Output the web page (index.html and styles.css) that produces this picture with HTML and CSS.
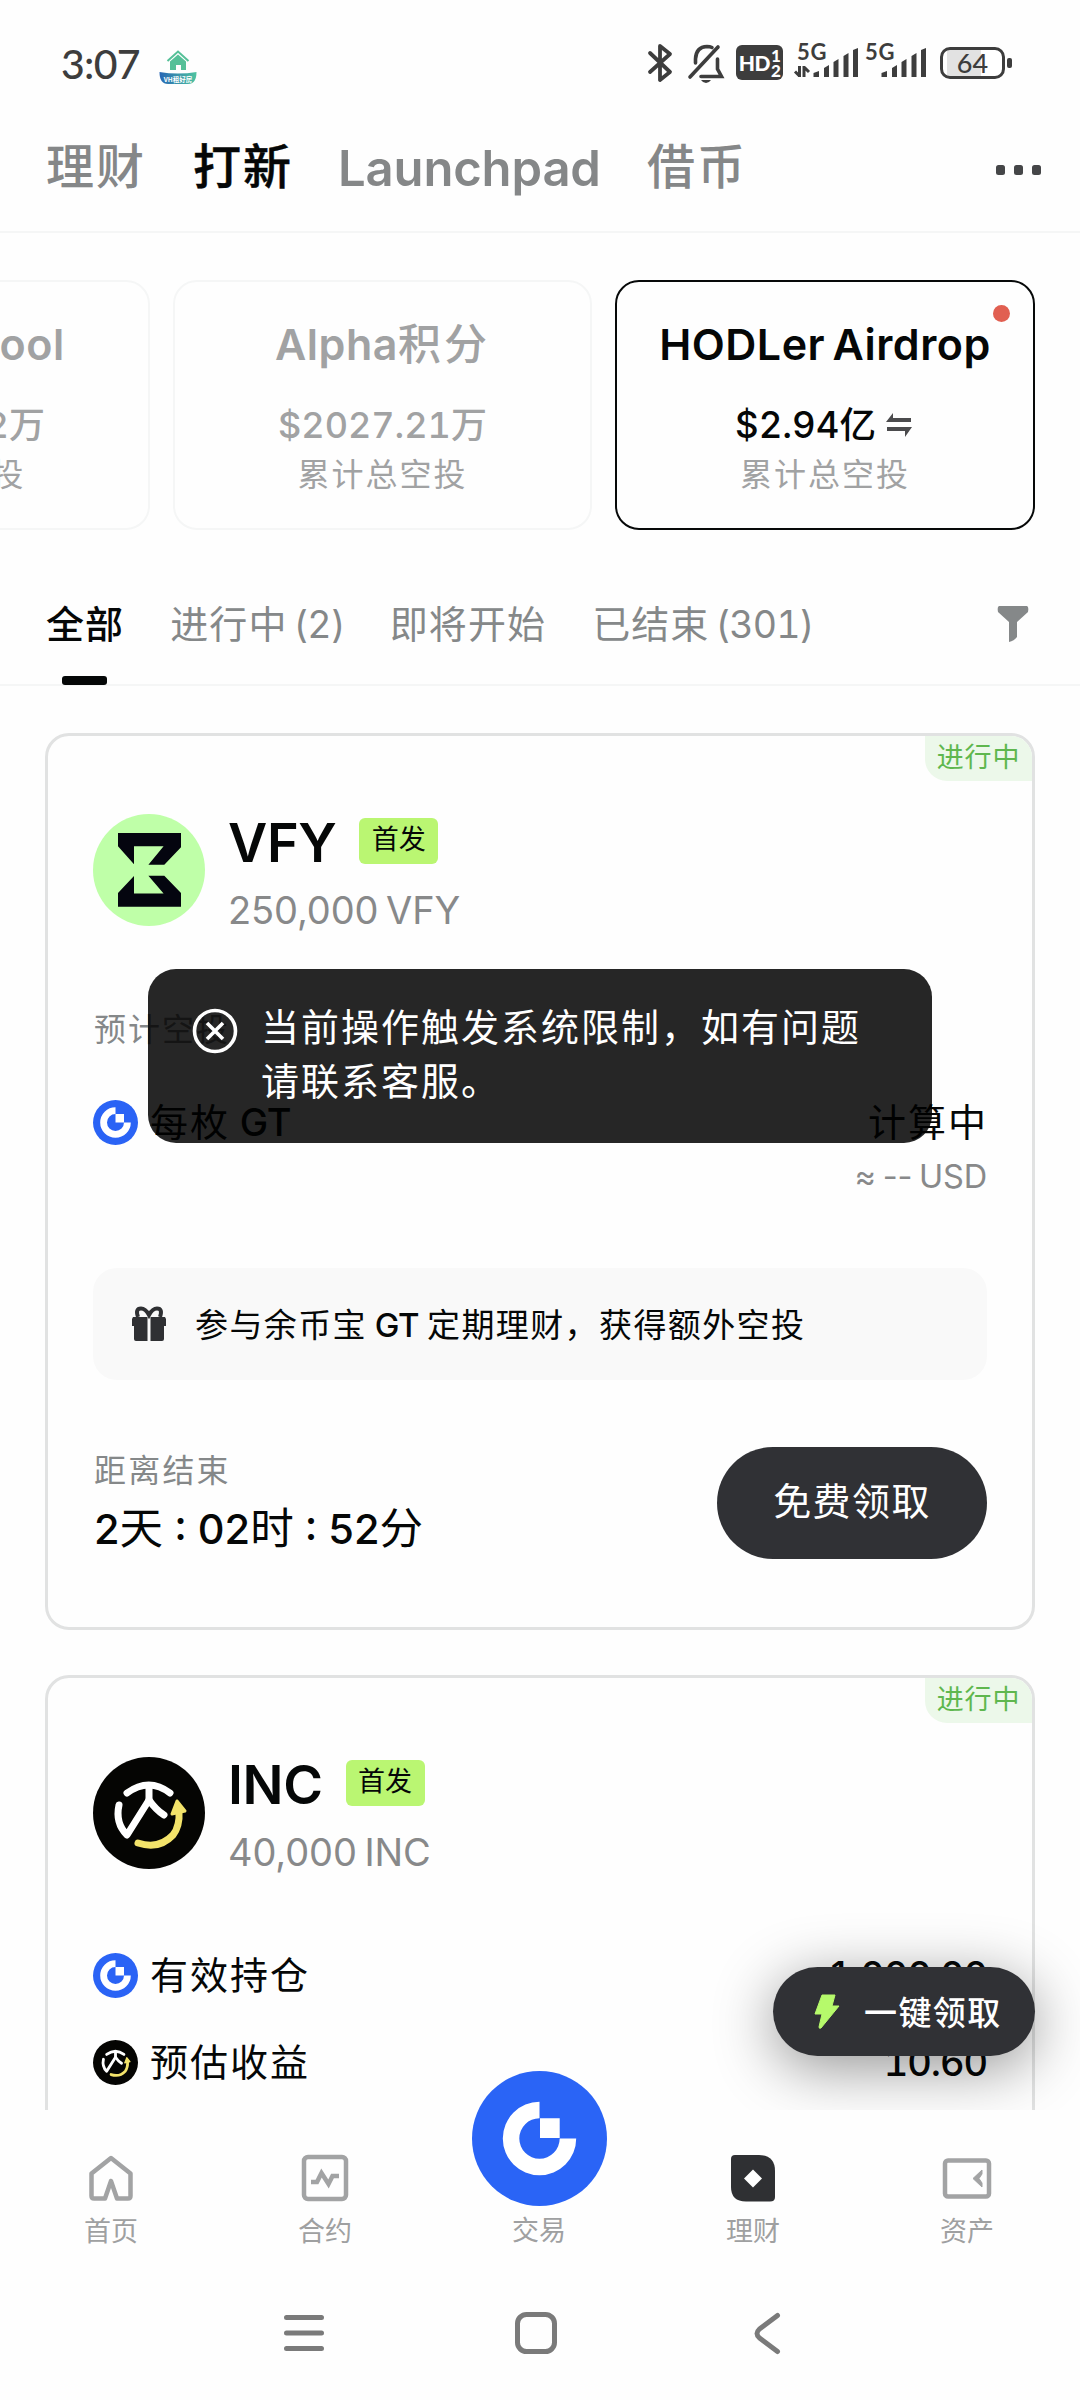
FILE: index.html
```html
<!DOCTYPE html>
<html lang="zh-CN">
<head>
<meta charset="utf-8">
<title>打新</title>
<link rel="stylesheet" href="styles.css">
</head>
<body>
<svg class="defs" width="0" height="0">
  <symbol id="gt" viewBox="0 0 45 45"><circle cx="22.500" cy="22.500" r="22.500" fill="#2a63f5"/><path d="M22.500 7.200A15.300 15.300 0 1 0 37.800 22.500H31A8.500 8.500 0 1 1 22.500 14ZM22.500 14H31V22.500H22.500Z" fill="#fff"/></symbol>
  <symbol id="inc" viewBox="0 0 112 112"><circle cx="56" cy="56" r="56" fill="#050503"/><g fill="none" stroke="#fff" stroke-width="7" stroke-linecap="round" stroke-linejoin="round"><path d="M34 36Q56 20 77 36"/><path d="M56 30V43L34 78Q22 66 26 48"/><path d="M56 43Q63 53 71 58"/></g><path d="M45 86Q66 93 80 78Q87 69 86 54" fill="none" stroke="#f3e36a" stroke-width="7" stroke-linecap="round"/><path d="M84 44L92 54L79 57Z" fill="#f3e36a" stroke="#f3e36a" stroke-width="3" stroke-linejoin="round"/></symbol>
</svg>

<div class="statusbar">
  <span class="clock">3:07</span>
  <svg class="house" width="38" height="36" viewBox="0 0 38 36"><defs><linearGradient id="boat" x1="0" x2="1"><stop offset="0" stop-color="#2766b5"/><stop offset="1" stop-color="#4fc4a0"/></linearGradient></defs><path d="M8.500 11L19 1.500L29.500 11" fill="none" stroke="#55c098" stroke-width="2"/><path d="M11 11.500L19 4.500L27 11.500V20H22V15H17V20H11Z" fill="#55c098"/><path d="M.5 22Q19 25 37.500 22Q37.500 34 29 34H9Q.5 34 .5 22Z" fill="url(#boat)"/><text x="19" y="32" text-anchor="middle" font-size="6.500" fill="#fff" class="boat-text">VH租好房</text></svg>
  <div class="sys">
    <svg width="24" height="40" viewBox="0 0 24 40"><path d="M2 10L22 29L12 37V3L22 11L2 29" fill="none" stroke="#3d3d3d" stroke-width="3.800" stroke-linejoin="round" stroke-linecap="round"/></svg>
    <svg class="bell" width="36" height="40" viewBox="0 0 36 40"><g fill="none" stroke="#3d3d3d" stroke-width="3.600" stroke-linecap="round"><path d="M7.500 20V16Q8 4 19 3.500Q22 3.500 24 4.500"/><path d="M30 4L2 34"/><path d="M13 33.500H33.500L29.500 26V16"/></g><path d="M13 37H23Q21 40 18 40Q15 40 13 37Z" fill="#3d3d3d"/></svg>
    <div class="hd"><span>HD</span><i>1<br>2</i></div>
    <svg class="sig" width="64" height="36" viewBox="0 0 64 36"><text x="2" y="16" class="g5">5G</text><path d="M18.500 33V29L24 27V33ZM29 33V24L34 21V33ZM38.500 33V18L43.500 15V33ZM48.500 33V12L53.500 9V33ZM58 33V6L63 4V33Z" fill="#3d3d3d"/><path d="M4.500 22V33M4.500 32L0 27.500M9 33V22M9 23L14 28" fill="none" stroke="#3d3d3d" stroke-width="3"/></svg>
    <svg class="sig2" width="64" height="36" viewBox="0 0 64 36"><text x="2" y="16" class="g5">5G</text><path d="M18.500 33V29L24 27V33ZM29 33V24L34 21V33ZM38.500 33V18L43.500 15V33ZM48.500 33V12L53.500 9V33ZM58 33V6L63 4V33Z" fill="#3d3d3d"/></svg>
    <div class="battery"><span>64</span></div><i class="nub"></i>
  </div>
</div>

<header class="tabs">
  <span class="cj">理财</span><span class="cj on">打新</span><span class="lp">Launchpad</span><span class="cj last">借币</span>
  <div class="dots"><i></i><i></i><i></i></div>
</header>

<section class="pools">
  <article class="pool first"><h3>Launchpool</h3><p class="amt">$1222.22万</p><p class="cap">累计总空投</p></article>
  <article class="pool"><h3>Alpha<b>积分</b></h3><p class="amt">$2027.21万</p><p class="cap">累计总空投</p></article>
  <article class="pool active"><h3>HODLer Airdrop</h3><p class="amt">$2.94亿<svg width="26" height="24" viewBox="0 0 26 24"><path d="M0 9L7 0V5H25V9ZM1 14H26L19 24V18H1Z" fill="#4b4b4d"/></svg></p><p class="cap">累计总空投</p><i class="reddot"></i></article>
</section>

<nav class="filters">
  <span class="on">全部</span><span>进行中<em>(2)</em></span><span>即将开始</span><span>已结束<em>(301)</em></span>
  <svg width="32" height="36" viewBox="0 0 32 36"><path d="M2 0H30Q32 1 31 6L20 16V31Q17 35 12 36V16L1 6Q0 1 2 0Z" fill="#858889"/></svg>
</nav>

<main>
  <article class="card">
    <span class="state">进行中</span>
    <div class="coin">
      <svg width="112" height="112" viewBox="0 0 112 112"><circle cx="56" cy="56" r="56" fill="#bfffa8"/><path d="M25 19H88V33.300L71.300 50.700H55.400L70.600 32.300H41V50.300L25 32.300ZM25 92.700H88V79L71.300 61.700H55.400L70.600 79.500H41V62L25 79Z" fill="#04050f"/></svg>
      <div><div class="name">VFY<span>首发</span></div><div class="qty">250,000 VFY</div></div>
    </div>
    <p class="label">预计空投</p>
    <div class="row"><svg width="45" height="45"><use href="#gt"/></svg><span>每枚 <em>GT</em></span><span class="val">计算中</span></div>
    <p class="usd">≈ -- USD</p>
    <div class="gift">
      <svg width="34" height="35" viewBox="0 0 34 35"><path d="M6 11Q3 2.500 9 2.500Q13.500 2.500 17 9Q20.500 2.500 25 2.500Q31 2.500 28 11" fill="none" stroke="#2f3033" stroke-width="4"/><path d="M1 11H15.500V20H0V13ZM18.500 11H33L34 13V20H18.500ZM2 19H15.500V35H4Q2 35 2 33ZM18.500 19H32V33Q32 35 30 35H18.500Z" fill="#2f3033"/></svg>
      <span>参与余币宝 <em>GT</em> 定期理财，获得额外空投</span>
    </div>
    <div class="foot">
      <div><p class="left">距离结束</p><p class="time"><em>2</em>天<em> : 02</em>时<em> : 52</em>分</p></div>
      <button>免费领取</button>
    </div>
  </article>
  <article class="card second">
    <span class="state">进行中</span>
    <div class="coin">
      <svg width="112" height="112"><use href="#inc"/></svg>
      <div><div class="name">INC<span>首发</span></div><div class="qty">40,000 INC</div></div>
    </div>
    <div class="row hold"><svg width="45" height="45"><use href="#gt"/></svg><span>有效持仓</span><span class="val num">1,000.00</span></div>
    <div class="row"><svg width="45" height="45"><use href="#inc"/></svg><span>预估收益</span><span class="val num">10.60</span></div>
  </article>
</main>

<div class="claim"><svg width="26" height="36" viewBox="0 0 26 36"><path d="M8 1H21L18 12H25L7 34Q5 35 5 33L8 20H1Z" fill="#b6fa6b" stroke="#b6fa6b" stroke-linejoin="round"/></svg><span>一键领取</span></div>

<div class="toast"><svg width="46" height="46" viewBox="0 0 46 46"><circle cx="23" cy="23" r="20.500" fill="none" stroke="#fff" stroke-width="3.600"/><path d="M15 15L31 31M31 15L15 31" stroke="#fff" stroke-width="3.600"/></svg><p>当前操作触发系统限制，如有问题<br>请联系客服。</p></div>

<nav class="tabbar">
  <div><svg width="48" height="48" viewBox="0 0 48 48"><path d="M24 4L43.500 19.500V42Q43.500 44.500 41 44.500H30L24 27L18 44.500H7Q4.500 44.500 4.500 42V19.500Z" fill="none" stroke="#a2a3a4" stroke-width="4.500" stroke-linejoin="round"/></svg><span>首页</span></div>
  <div><svg width="48" height="48" viewBox="0 0 48 48"><rect x="3" y="3" width="42" height="42" rx="4" fill="none" stroke="#a2a3a4" stroke-width="4.500"/><path d="M10 28H16L20.500 19L27.500 30L31.500 22H38" fill="none" stroke="#a2a3a4" stroke-width="4.500"/></svg><span>合约</span></div>
  <div class="trade"><svg width="135" height="135" viewBox="0 0 135 135"><circle cx="67.500" cy="67.500" r="67.500" fill="#2a64f6"/><path d="M67.500 30.800A36.700 36.700 0 1 0 104.200 67.500H87.700A20.200 20.200 0 1 1 67.500 47.300ZM68 47.300H87.700V67H68Z" fill="#fff"/></svg><span>交易</span></div>
  <div><svg width="48" height="48" viewBox="0 0 48 48"><path d="M6 1H30Q46 1 46 17V43Q46 47.500 41 47.500H17Q2 47.500 2 33V5Q2 1 6 1Z" fill="#2f3033"/><path d="M24 15.500L33 24.500L24 33.500L15 24.500Z" fill="#fff"/></svg><span>理财</span></div>
  <div><svg width="50" height="48" viewBox="0 0 50 48"><rect x="3" y="6.500" width="44" height="36" rx="3" fill="none" stroke="#a2a3a4" stroke-width="4.500"/><path d="M40 16V20L37 24.500L40 29V33L31 24.500Z" fill="#a2a3a4" stroke="#a2a3a4" stroke-linejoin="round"/></svg><span>资产</span></div>
</nav>

<div class="sysnav">
  <svg width="48" height="48" viewBox="0 0 48 48"><path d="M6.500 8.500H41.500M6.500 24H41.500M6.500 39.500H41.500" stroke="#7a7a7a" stroke-width="5" stroke-linecap="round"/></svg>
  <svg width="48" height="48" viewBox="0 0 48 48"><rect x="5.500" y="5.500" width="37" height="37" rx="9" fill="none" stroke="#7a7a7a" stroke-width="5"/></svg>
  <svg width="48" height="48" viewBox="0 0 48 48"><path d="M33.500 6.500L15.500 20Q10.500 24.500 15.500 29L33.500 42.500" fill="none" stroke="#7a7a7a" stroke-width="5" stroke-linecap="round" stroke-linejoin="round"/></svg>
</div>
</body>
</html>
```
FILE: styles.css
```css
* { box-sizing: border-box; }
body { margin: 0; width: 1080px; height: 2400px; overflow: hidden; position: relative; display: flex; flex-direction: column; background: #fefefe; color: #050707; font-family: Inter, "Noto Sans CJK SC", sans-serif; }
p, h3 { margin: 0; }
em, i, b { font-style: normal; font-weight: inherit; }
svg { display: block; flex: none; overflow: visible; }
span { white-space: nowrap; }
.defs { position: absolute; }

.statusbar { height: 100px; flex: none; display: flex; align-items: flex-start; padding: 0 68px 0 61px; color: #3d3d3d; }
.clock { font: 500 41px/50px Lato, sans-serif; width: 98px; margin-top: 39px; letter-spacing: -.7px; }
.house { margin-top: 50px; }
.boat-text { font-family: "Noto Sans CJK SC", sans-serif; font-weight: 700; }
.sys { margin-left: auto; display: flex; align-items: flex-start; padding-top: 43px; }
.bell { margin-left: 16px; }
.hd { width: 47px; height: 35px; margin: 2px 0 0 12px; border-radius: 6px; background: #3d3d3d; color: #fff; display: flex; align-items: center; justify-content: center; font: 900 21px/20px Lato, sans-serif; letter-spacing: -.5px; }
.hd i { font-size: 17px; line-height: 15px; margin-left: 1px; }
.sig { margin: 1px 0 0 12px; }
.sig2 { margin: 1px 0 0 4px; }
.g5 { font: 700 22px Lato, sans-serif; letter-spacing: .8px; fill: #3d3d3d; }
.battery { width: 65px; height: 32px; margin: 4px 0 0 13px; border: 3px solid #3d3d3d; border-radius: 10px; display: flex; align-items: center; justify-content: center; background: linear-gradient(90deg, #fff 4px, #e2e2e2 4px, #e2e2e2 38px, #fff 38px); font: 500 27px/26px Lato, sans-serif; }
.nub { width: 5px; height: 10px; border-radius: 2px; background: #3d3d3d; margin: 15px 0 0 2px; }

.tabs { height: 133px; flex: none; border-bottom: 2px solid #f5f6f6; display: flex; align-items: center; padding: 0 39px 0 46px; color: #858788; font-weight: 500; }
.tabs span { line-height: 60px; padding-top: 3px; }
.cj { font-size: 48px; letter-spacing: 2px; width: 147px; }
.tabs .on { color: #050707; -webkit-text-stroke: .5px #050707; }
.tabs .lp { font-size: 49px; font-weight: 600; width: 309px; margin-left: -2px; letter-spacing: -.15px; padding-top: 6px; }
.tabs .last { width: 110px; }
.dots { margin-left: auto; display: flex; gap: 8.500px; padding-top: 9px; }
.dots i { width: 9.500px; height: 10px; border-radius: 2.500px; background: #454648; }

.pools { height: 343px; flex: none; display: flex; justify-content: flex-end; gap: 23px; padding: 47px 45px 0 0; }
.pool { width: 419px; height: 250px; flex: none; border: 2px solid #f5f6f6; border-radius: 24px; text-align: center; color: #a1a2a3; padding-top: 34px; position: relative; }
.pool h3 { font-size: 43px; line-height: 56px; font-weight: 600; letter-spacing: .5px; word-spacing: -4px; }
.pool b { font-weight: 500; font-size: 43px; letter-spacing: 3px; }
.amt { font-size: 36.500px; line-height: 50px; font-weight: 500; margin-top: 28px; font-variant-numeric: tabular-nums; display: flex; align-items: center; justify-content: center; }
.pool:not(.active) .amt { font-size: 36px; font-weight: 450; letter-spacing: 0; }
.active .amt { padding-right: 3px; }
.amt svg { margin-left: 10px; }
.cap { font-size: 32px; line-height: 48px; letter-spacing: 2px; margin-top: 1px; }
.pool.active { width: 420px; border-color: #070909; }
.active h3, .active .amt { color: #050707; }
.reddot { position: absolute; top: 23px; right: 23px; width: 17px; height: 17px; border-radius: 50%; background: #e15f51; }

.filters { height: 110px; flex: none; display: flex; align-items: flex-start; gap: 46px; padding: 18px 52px 0 46px; border-bottom: 2px solid #f5f6f6; font-size: 38px; line-height: 60px; letter-spacing: 1.100px; color: #858889; }
.filters .on { color: #050707; font-weight: 500; height: 91px; display: flex; flex-direction: column; align-items: center; }
.filters .on::after { content: ""; width: 45px; height: 9px; border-radius: 3px; background: #050707; margin: auto 2px 0 0; }
.filters em { margin: 0 -1px 0 6px; font-size: 37.500px; letter-spacing: -.8px; font-variant-numeric: tabular-nums; }
.filters svg { margin: 12px -1px 0 auto; }

main { height: 1424px; flex: none; overflow: hidden; padding: 47px 45px 0; display: flex; flex-direction: column; gap: 45px; }
.card { height: 897px; flex: none; border: 3px solid #e1e2e2; border-radius: 24px; padding: 78px 45px 0; position: relative; overflow: hidden; }
.state { position: absolute; top: 0; right: 0; height: 45px; width: 107px; border-bottom-left-radius: 22px; background: #ecf8ea; color: #5fb74f; font-size: 27px; line-height: 44px; text-align: center; letter-spacing: .8px; }
.coin { display: flex; gap: 23px; height: 112px; padding-top: 1px; }
.coin > svg { margin-top: -1px; }
.second .coin > svg { margin-top: 0; }
.name { display: flex; font-size: 54px; font-weight: 600; line-height: 56px; letter-spacing: -.4px; }
.name span { width: 79px; height: 46px; margin: 3px 0 0 23px; border-radius: 6px; background: #baf672; font-size: 27px; line-height: 44px; text-align: center; font-weight: 400; letter-spacing: 0; }
.qty { font-size: 38px; line-height: 50px; margin-top: 14px; color: #88898a; word-spacing: -3px; letter-spacing: -.1px; }
.label { font-size: 32px; line-height: 48px; letter-spacing: 2px; color: #858889; margin-top: 80px; padding-left: 1px; }
.row { display: flex; align-items: center; height: 60px; margin-top: 38px; font-size: 38px; line-height: 60px; letter-spacing: 2px; }
.row > svg { margin-right: 12px; }
.row > span { padding-bottom: 1px; word-spacing: -3px; }
.row em { font-weight: 450; letter-spacing: -.3px; }
.row .val { margin: 0 -1px 0 auto; }
.row .num { margin-right: 0; letter-spacing: -1.100px; font-weight: 450; font-variant-numeric: tabular-nums; }
.usd { font-size: 32.500px; line-height: 44px; text-align: right; color: #88898a; margin-top: 3px; word-spacing: -2px; letter-spacing: -.2px; }
.gift { height: 112px; border-radius: 24px; background: #f9f9f9; margin-top: 69px; display: flex; align-items: center; gap: 29px; padding: 0 0 2px 39px; font-size: 33px; letter-spacing: 1.400px; word-spacing: -3px; }
.gift em { font-weight: 450; letter-spacing: -.3px; }
.foot { display: flex; justify-content: space-between; margin-top: 67px; height: 112px; }
.left { font-size: 32px; line-height: 46px; letter-spacing: 2.200px; color: #858889; padding: 1px 0 0 1px; }
.time { font-size: 43.500px; line-height: 60px; margin-top: 4px; padding-left: 1px; white-space: pre; }
.time em { font-weight: 450; font-size: 41.500px; }
button { width: 270px; height: 112px; border: 0; border-radius: 56px; background: #303135; color: #fff; font: 400 38px/56px Inter, "Noto Sans CJK SC", sans-serif; letter-spacing: 1.400px; padding: 0 0 5px; }
.hold { margin-top: 77px; }
.hold + .row { margin-top: 27px; }

.claim { position: absolute; left: 773px; top: 1967px; width: 262px; height: 89px; border-radius: 45px; background: #303135; color: #fff; display: flex; align-items: center; padding-left: 41px; gap: 24px; font-size: 33px; font-weight: 500; letter-spacing: 1.400px; box-shadow: 0 12px 60px rgba(0, 0, 0, .42); }
.claim span { padding-bottom: 1px; }
.toast { position: absolute; left: 148px; top: 969px; width: 784px; height: 174px; border-radius: 28px; background: rgba(0, 0, 0, .85); color: #fff; display: flex; padding: 31px 0 0 44px; gap: 23px; font-size: 38px; line-height: 54px; letter-spacing: 2px; white-space: nowrap; }
.toast svg { margin-top: 8px; }

.tabbar { height: 170px; flex: none; background: #fefefe; position: relative; display: flex; padding-left: 4px; color: #9fa0a1; font-size: 27px; line-height: 40px; }
.tabbar div { width: 214px; flex: none; display: flex; flex-direction: column; align-items: center; padding-top: 44px; gap: 8px; }
.tabbar .trade { padding-top: 0; margin-top: -39px; gap: 5px; }
.tabbar span { margin-top: 2px; }
.tabbar .trade span { margin-top: 0; }
.sysnav { height: 120px; flex: none; display: flex; justify-content: space-between; padding: 29px 288px 0 280px; }
```
